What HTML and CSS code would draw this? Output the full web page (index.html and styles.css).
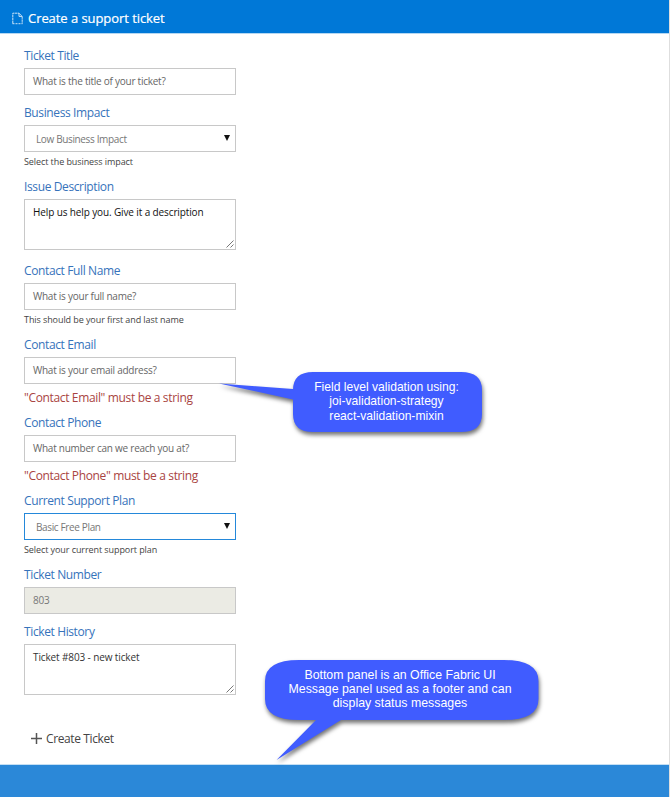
FILE: index.html
```html
<!DOCTYPE html>
<html lang="en">
<head>
<meta charset="utf-8">
<title>Create a support ticket</title>
<link rel="stylesheet" href="styles.css">
</head>
<body>
<div class="page">
  <header class="header">
    <svg class="doc" width="11" height="13" viewBox="0 0 11 13" fill="none" stroke="currentColor"><path d="M.8 11.5V1.2H7L10.2 4.4V11.5" stroke-dasharray="2.500 .5"/><path d="M7 1.2V4.4H10.2"/><path d="M.5 11.7H10.5" stroke-dasharray="2 1"/></svg>
    <h1>Create a support ticket</h1>
  </header>
  <main class="form">
    <div class="field"><label>Ticket Title</label><div class="control"><span>What is the title of your ticket?</span></div></div>
    <div class="field"><label>Business Impact</label><div class="control select"><span>Low Business Impact</span><i class="arrow"></i></div><p class="hint">Select the business impact</p></div>
    <div class="field long"><label>Issue Description</label><div class="control area black"><span>Help us help you. Give it a description</span><svg class="grip" width="8" height="8" viewBox="0 0 8 8"><path d="M.5 7.5L7.5.5M4.5 7.5L7.5 4.5"/></svg></div></div>
    <div class="field"><label>Contact Full Name</label><div class="control"><span>What is your full name?</span></div><p class="hint">This should be your first and last name</p></div>
    <div class="field"><label>Contact Email</label><div class="control"><span>What is your email address?</span></div><p class="error">"Contact Email" must be a string</p></div>
    <div class="field"><label>Contact Phone</label><div class="control"><span>What number can we reach you at?</span></div><p class="error">"Contact Phone" must be a string</p></div>
    <div class="field"><label>Current Support Plan</label><div class="control select focus"><span>Basic Free Plan</span><i class="arrow"></i></div><p class="hint">Select your current support plan</p></div>
    <div class="field"><label>Ticket Number</label><div class="control disabled"><span>803</span></div></div>
    <div class="field"><label>Ticket History</label><div class="control area"><span>Ticket #803 - new ticket</span><svg class="grip" width="8" height="8" viewBox="0 0 8 8"><path d="M.5 7.5L7.5.5M4.5 7.5L7.5 4.5"/></svg></div></div>
    <div class="create"><svg width="11" height="11" viewBox="0 0 11 11"><path d="M5.5 0V11M0 5.5H11" stroke="#555" stroke-width="1.5"/></svg><span>Create Ticket</span></div>
  </main>
  <footer class="footer"></footer>
  <div class="callout email">
    <svg width="266" height="64" viewBox="0 0 266 64"><path d="M95 0H243Q264 0 264 18V42Q264 60 243 60H95Q75 60 75 42V27.500L1 11.500L75 17V18Q75 0 95 0Z"/></svg>
    <p>Field level validation using:<br>joi-validation-strategy<br>react-validation-mixin</p>
  </div>
  <div class="callout panel">
    <svg width="276" height="104" viewBox="0 0 276 104"><path d="M34 0H239Q273.500 0 273.500 21V39Q273.500 60 239 60H76L11.500 100L51 60H34Q0 60 0 39V21Q0 0 34 0Z"/></svg>
    <p>Bottom panel is an Office Fabric UI<br>Message panel used as a footer and can<br>display status messages</p>
  </div>
</div>
</body>
</html>
```
FILE: styles.css
```css
* { box-sizing: border-box; }
body, p, h1 { margin: 0; }
body { background: #fff; font-family: "Open Sans", "Noto Sans", sans-serif; overflow: hidden; }
.page { position: relative; height: 797px; display: flex; flex-direction: column; border-right: 1px solid #dedede; }
.header { height: 33px; flex: none; background: #0078d7; color: #fff; display: flex; align-items: center; padding: 3px 0 0 12px; gap: 5px; box-shadow: 0 1px #b4d7f2; }
.doc { opacity: .8; }
h1 { font-size: 13px; font-weight: 400; line-height: 20px; letter-spacing: -.06px; -webkit-text-stroke: .2px #fff; white-space: nowrap; }
.form { flex: 1; padding: 13px 0 0 24px; }
.field { width: 212px; margin-bottom: 8px; white-space: nowrap; }
.field.long { margin-bottom: 11px; }
label { display: block; height: 22px; line-height: 19px; font-size: 12px; letter-spacing: -.38px; color: #3673bb; }
.control { position: relative; height: 27px; border: 1px solid #c8c8c8; padding: 0 8px; line-height: 25px; font-size: 10px; letter-spacing: -.25px; color: #666; }
.select { display: flex; justify-content: space-between; align-items: center; padding: 1px 5px 0 11px; letter-spacing: -.36px; color: #777; }
.arrow { width: 6px; height: 6px; margin-bottom: 2px; background: #111; clip-path: polygon(0 0, 100% 0, 50% 100%); }
.focus { border-color: #2488da; }
.disabled { background: #ebebe4; color: #777; }
.area { height: 51px; letter-spacing: -.12px; color: #333; }
.black { color: #111; }
.grip { position: absolute; right: 1px; bottom: 1px; fill: none; stroke: #777; }
.hint { height: 17px; line-height: 19px; font-size: 9px; letter-spacing: -.08px; color: #444; }
.error { height: 21px; line-height: 27px; font-size: 12px; letter-spacing: -.35px; color: #a94442; }
.create { display: flex; align-items: center; gap: 4px; height: 20px; margin: 33px 0 0 7px; font-size: 12px; letter-spacing: -.38px; color: #444; }
.footer { height: 32px; flex: none; background: #2b88d8; box-shadow: 0 -1px #c4dff4; }
.callout { position: absolute; color: #fff; font: 12.1px/14.4px "Liberation Sans", sans-serif; text-align: center; white-space: nowrap; }
.callout svg { display: block; overflow: visible; fill: #405cff; filter: drop-shadow(1px 3px 2px rgba(0,0,0,.55)); }
.callout p { position: absolute; top: 8px; }
.email { left: 218px; top: 372px; }
.email p { left: 74px; width: 189px; }
.panel { left: 265px; top: 659.5px; font-size: 12.35px; }
.panel p { left: 0; width: 270px; }
```
